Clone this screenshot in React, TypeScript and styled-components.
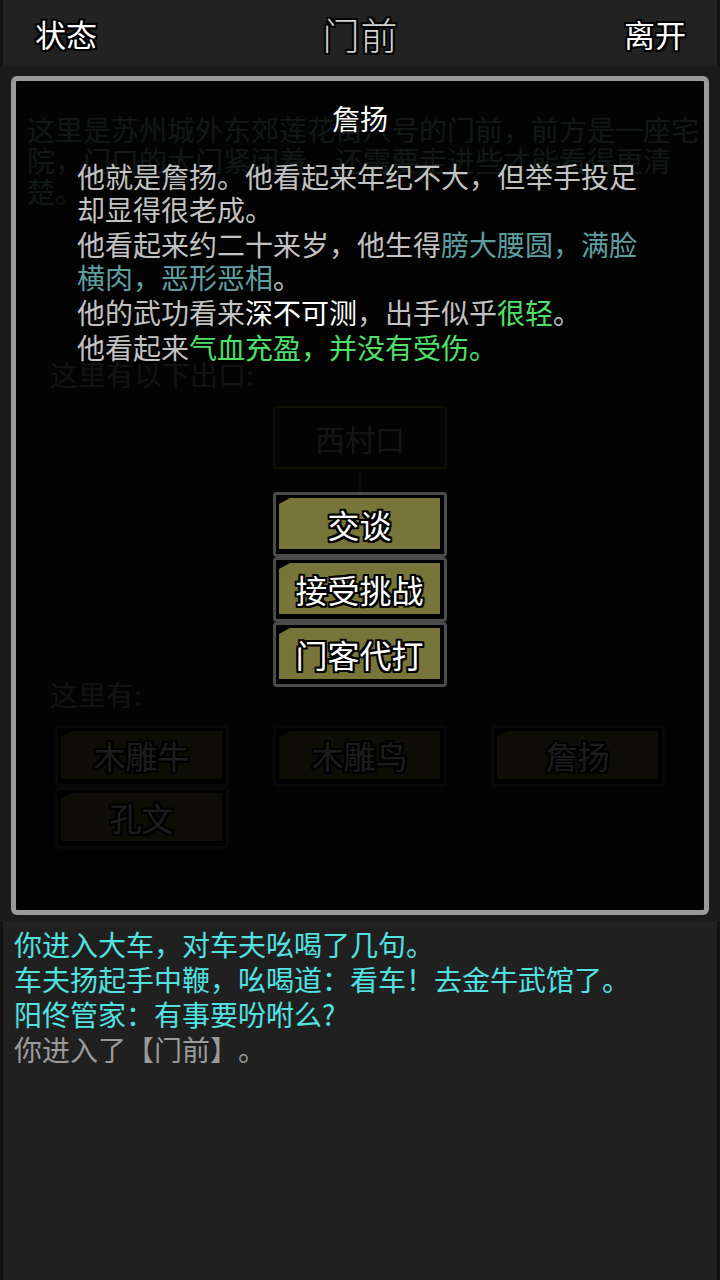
import styled, { createGlobalStyle, css } from 'styled-components'

const GlobalStyle = createGlobalStyle`
  html, body {
    margin: 0;
    padding: 0;
    background: #111;
  }
  body {
    font-family: "Noto Sans CJK SC", "Noto Sans", sans-serif;
    text-spacing-trim: space-all;
  }
  #root {
    width: 720px;
    height: 1280px;
  }
`

const outline = (c: string, w: number) => css`
  text-shadow:
    ${w}px 0 0 ${c}, -${w}px 0 0 ${c}, 0 ${w}px 0 ${c}, 0 -${w}px 0 ${c},
    ${w}px ${w}px 0 ${c}, -${w}px ${w}px 0 ${c}, ${w}px -${w}px 0 ${c}, -${w}px -${w}px 0 ${c};
`

const Page = styled.div`
  width: 720px;
  height: 1280px;
  display: flex;
  flex-direction: column;
  background: #111;
  overflow: hidden;
`

const TopBar = styled.div`
  height: 67px;
  margin: 0 3px;
  background: #222;
  display: grid;
  grid-template-columns: 1fr auto 1fr;
  align-items: center;
  padding: 0 31px 0 32px;
`

const BarLabel = styled.div<{ $right?: boolean }>`
  justify-self: ${p => (p.$right ? 'end' : 'start')};
  font-size: 31px;
  line-height: 40px;
  color: #fff;
  ${outline('#000', 2)}
`

const RoomTitle = styled.div`
  font-size: 37px;
  line-height: 44px;
  font-weight: 300;
  color: #d2d2d2;
  letter-spacing: 1px;
  ${outline('#050505', 2)}
`

const Main = styled.div`
  position: relative;
  flex: 1;
  background: #202020;
`

const Scene = styled.div`
  display: flex;
  flex-direction: column;
  font-size: 28px;
`

const SceneDesc = styled.div`
  padding: 47px 14px 0 27px;
  line-height: 31px;
  color: #9cd6cc;
`

const SceneLabel = styled.div<{ $mt: number }>`
  margin-top: ${p => p.$mt}px;
  padding-left: 50px;
  line-height: 34px;
  color: #a8a8a8;
`

const MapArea = styled.div`
  margin-top: 15px;
  display: flex;
  flex-direction: column;
  align-items: center;
`

const MapNode = styled.div`
  width: 174px;
  height: 63px;
  box-sizing: border-box;
  border: 2px solid #8c7a2c;
  border-radius: 3px;
  display: flex;
  align-items: center;
  justify-content: center;
  color: #bdbdbd;
  font-size: 30px;
`

const MapLink = styled.div<{ $len: number }>`
  width: 2px;
  height: ${p => p.$len}px;
  background: #2f6f6f;
`

const NpcGrid = styled.div`
  margin-top: 14px;
  padding-left: 55px;
  display: grid;
  grid-template-columns: repeat(3, 174px);
  column-gap: 44px;
`

const Btn = styled.div<{ $h: number }>`
  width: 174px;
  height: ${p => p.$h}px;
  box-sizing: border-box;
  border: 3px solid #4b4b4b;
  border-radius: 4px;
  background: #000;
  padding: 3px 4px 5px 3px;
  display: flex;
`

const BtnFace = styled.div`
  flex: 1;
  background: #77753a;
  clip-path: polygon(11px 0, 100% 0, 100% 100%, 0 100%, 0 6px);
  display: flex;
  align-items: center;
  justify-content: center;
  font-size: 32px;
  line-height: 1;
  color: #fff;
  ${outline('#000', 2)}
`

const Overlay = styled.div`
  position: absolute;
  inset: 0;
  background: rgba(0, 0, 0, 0.15);
  padding: 9px 11px 6px;
  display: flex;
`

const Modal = styled.div`
  flex: 1;
  border: 5px solid #9a9a9a;
  border-radius: 6px;
  background: rgba(0, 0, 0, 0.87);
  display: flex;
  flex-direction: column;
  align-items: center;
  padding-top: 20px;
`

const ModalTitle = styled.div`
  font-size: 28px;
  line-height: 34px;
  color: #fff;
`

const ModalDesc = styled.div`
  align-self: stretch;
  margin-top: 25px;
  padding: 0 61px;
  font-size: 28px;
  line-height: 33px;
  color: #c2c2c2;
`

const Para = styled.p`
  margin: 0 0 2px;
`

const Tone = styled.span<{ $c: string }>`
  color: ${p => p.$c};
`

const Actions = styled.div`
  margin-top: 126px;
  display: flex;
  flex-direction: column;
`

const Log = styled.div`
  height: 359px;
  margin: 0 3px;
  box-sizing: border-box;
  background: #202020;
  padding: 6px 11px;
  font-size: 28px;
  line-height: 35px;
`

const LogLine = styled.div<{ $c: string }>`
  color: ${p => p.$c};
`

const npcs = ['木雕牛', '木雕鸟', '詹扬', '孔文']
const actions = ['交谈', '接受挑战', '门客代打']

const CADET = '#5f9ea0'
const GREEN = '#4fe06a'

export default function App() {
  return (
    <Page>
      <GlobalStyle />
      <TopBar>
        <BarLabel>状态</BarLabel>
        <RoomTitle>门前</RoomTitle>
        <BarLabel $right>离开</BarLabel>
      </TopBar>

      <Main>
        <Scene>
          <SceneDesc>
            这里是苏州城外东郊莲花街八号的门前，前方是一座宅院，门口的大门紧闭着，还需要走进些才能看得更清楚。
          </SceneDesc>
          <SceneLabel $mt={150}>这里有以下出口:</SceneLabel>
          <MapArea>
            <MapNode>西村口</MapNode>
            <MapLink $len={122} />
            <MapNode>大门</MapNode>
          </MapArea>
          <SceneLabel $mt={23}>这里有:</SceneLabel>
          <NpcGrid>
            {npcs.map(n => (
              <Btn key={n} $h={62}>
                <BtnFace>{n}</BtnFace>
              </Btn>
            ))}
          </NpcGrid>
        </Scene>

        <Overlay>
          <Modal>
            <ModalTitle>詹扬</ModalTitle>
            <ModalDesc>
              <Para>他就是詹扬。他看起来年纪不大，但举手投足却显得很老成。</Para>
              <Para>
                他看起来约二十来岁，他生得<Tone $c={CADET}>膀大腰圆，满脸横肉，恶形恶相</Tone>。
              </Para>
              <Para>
                他的武功看来<Tone $c="#fff">深不可测</Tone>，出手似乎<Tone $c={GREEN}>很轻</Tone>。
              </Para>
              <Para>
                他看起来<Tone $c={GREEN}>气血充盈，并没有受伤。</Tone>
              </Para>
            </ModalDesc>
            <Actions>
              {actions.map(a => (
                <Btn key={a} $h={65}>
                  <BtnFace>{a}</BtnFace>
                </Btn>
              ))}
            </Actions>
          </Modal>
        </Overlay>
      </Main>

      <Log>
        <LogLine $c="#52e2e2">你进入大车，对车夫吆喝了几句。</LogLine>
        <LogLine $c="#52e2e2">车夫扬起手中鞭，吆喝道：看车！去金牛武馆了。</LogLine>
        <LogLine $c="#52e2e2">阳佟管家：有事要吩咐么?</LogLine>
        <LogLine $c="#9a9a9a">你进入了【门前】。</LogLine>
      </Log>
    </Page>
  )
}
